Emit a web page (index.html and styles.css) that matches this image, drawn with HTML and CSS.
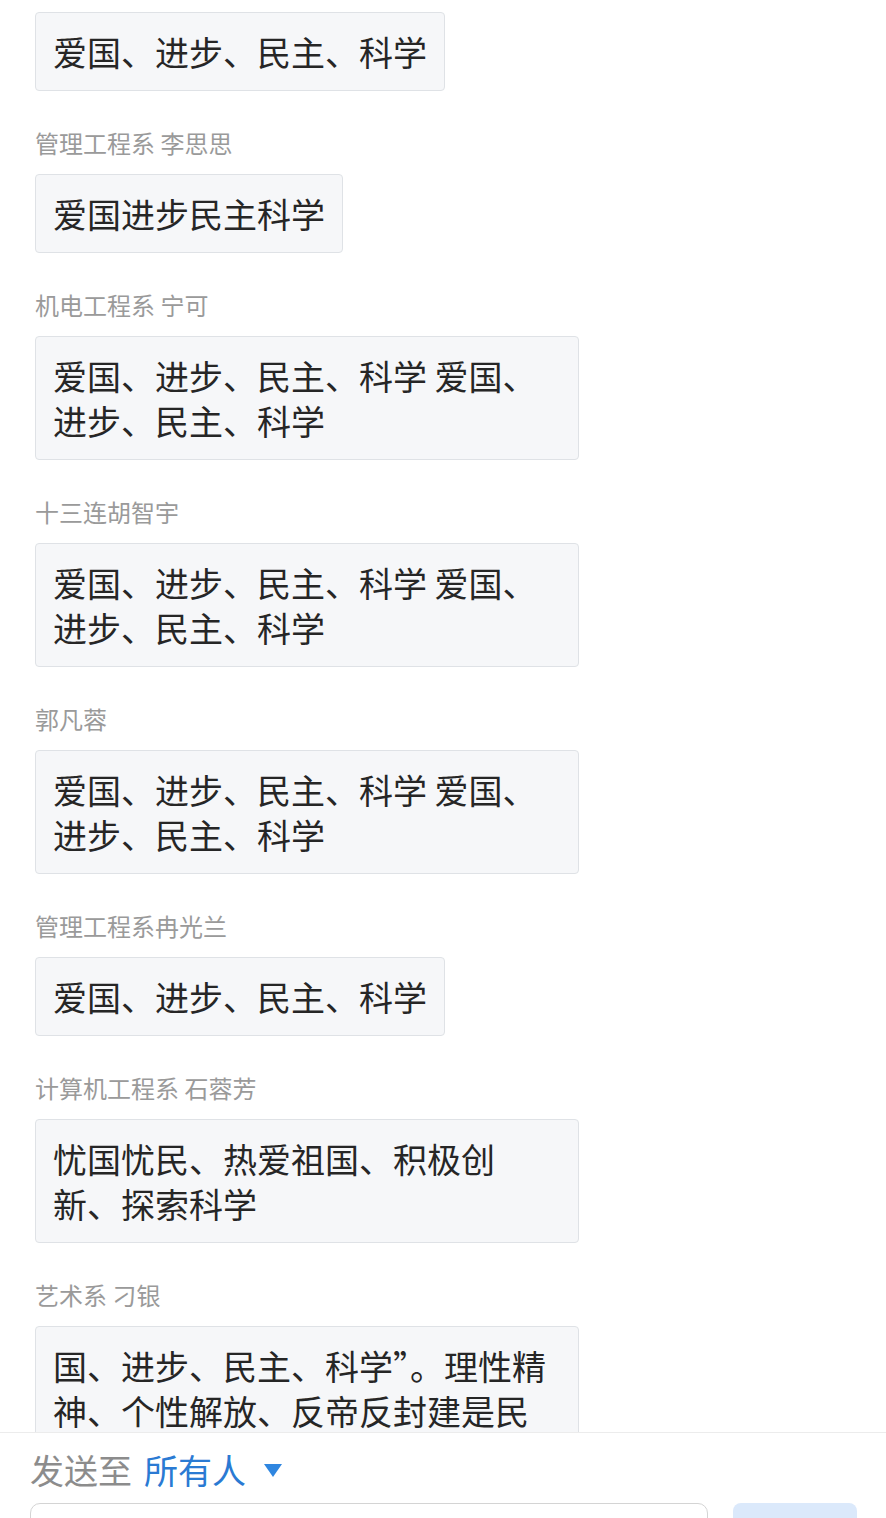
FILE: index.html
```html
<!DOCTYPE html>
<html lang="zh-CN">
<head>
  <meta charset="UTF-8">
  <meta name="viewport" content="width=device-width, initial-scale=1.0">
  <title>弹幕互动</title>
  <link rel="stylesheet" href="styles.css">
</head>
<body>
  <div class="page">
    <div class="message-list">
      <div class="message first">
        <div class="bubble">爱国、进步、民主、科学</div>
      </div>
      <div class="message">
        <div class="sender">管理工程系 李思思</div>
        <div class="bubble">爱国进步民主科学</div>
      </div>
      <div class="message">
        <div class="sender">机电工程系 宁可</div>
        <div class="bubble">爱国、进步、民主、科学 爱国、进步、民主、科学</div>
      </div>
      <div class="message">
        <div class="sender">十三连胡智宇</div>
        <div class="bubble">爱国、进步、民主、科学 爱国、进步、民主、科学</div>
      </div>
      <div class="message">
        <div class="sender">郭凡蓉</div>
        <div class="bubble">爱国、进步、民主、科学 爱国、进步、民主、科学</div>
      </div>
      <div class="message">
        <div class="sender">管理工程系冉光兰</div>
        <div class="bubble">爱国、进步、民主、科学</div>
      </div>
      <div class="message">
        <div class="sender">计算机工程系 石蓉芳</div>
        <div class="bubble">忧国忧民、热爱祖国、积极创新、探索科学</div>
      </div>
      <div class="message">
        <div class="sender">艺术系 刁银</div>
        <div class="bubble">国、进步、民主、科学”。理性精神、个性解放、反帝反封建是民</div>
      </div>
    </div>

    <div class="composer">
      <div class="send-to">
        <span class="send-label">发送至</span>
        <span class="send-target">所有人</span>
        <span class="send-arrow"></span>
      </div>
      <div class="composer-row">
        <div class="composer-input"></div>
        <div class="composer-btn"></div>
      </div>
    </div>
  </div>
</body>
</html>
```

FILE: styles.css
```css
body {
  font-family: "Noto Sans CJK SC", "Noto Sans", sans-serif;
  margin: 0;
  padding: 0;
  background-color: #ffffff;
}

.page {
  height: 1518px;
  display: flex;
  flex-direction: column;
  overflow: hidden;
}

.message-list {
  flex: 1;
  min-height: 0;
  overflow: hidden;
  padding: 0 35px;
}

.message {
  margin-top: 36px;
}

.message.first {
  margin-top: 12px;
}

.sender {
  font-size: 24px;
  line-height: 32px;
  color: #9a9a9a;
  margin-bottom: 15px;
}

.bubble {
  display: inline-block;
  max-width: 508px;
  padding: 16px 17px;
  font-size: 34px;
  line-height: 45px;
  color: #262626;
  background-color: #f6f7f9;
  border: 1px solid #dfe2e6;
  border-radius: 4px;
  word-break: break-all;
}

/* barra de envio */
.composer {
  flex-shrink: 0;
  box-sizing: border-box;
  height: 86px;
  border-top: 1px solid #ececec;
  background-color: #ffffff;
  padding: 16px 29px 0 30px;
  overflow: hidden;
}

.send-to {
  display: flex;
  align-items: center;
  height: 40px;
  font-size: 34px;
}

.send-label {
  color: #8c8c8c;
}

.send-target {
  color: #2a7ad3;
  margin-left: 12px;
}

.send-arrow {
  width: 0;
  height: 0;
  margin-left: 18px;
  margin-top: 2px;
  border-left: 9px solid transparent;
  border-right: 9px solid transparent;
  border-top: 13px solid #2f86e0;
}

.composer-row {
  display: flex;
  gap: 25px;
  margin-top: 14px;
}

.composer-input {
  flex: 1;
  height: 70px;
  border: 1px solid #d4d4d4;
  border-radius: 10px;
}

.composer-btn {
  width: 124px;
  height: 70px;
  background-color: #dbe9fb;
  border-radius: 8px;
}
```
